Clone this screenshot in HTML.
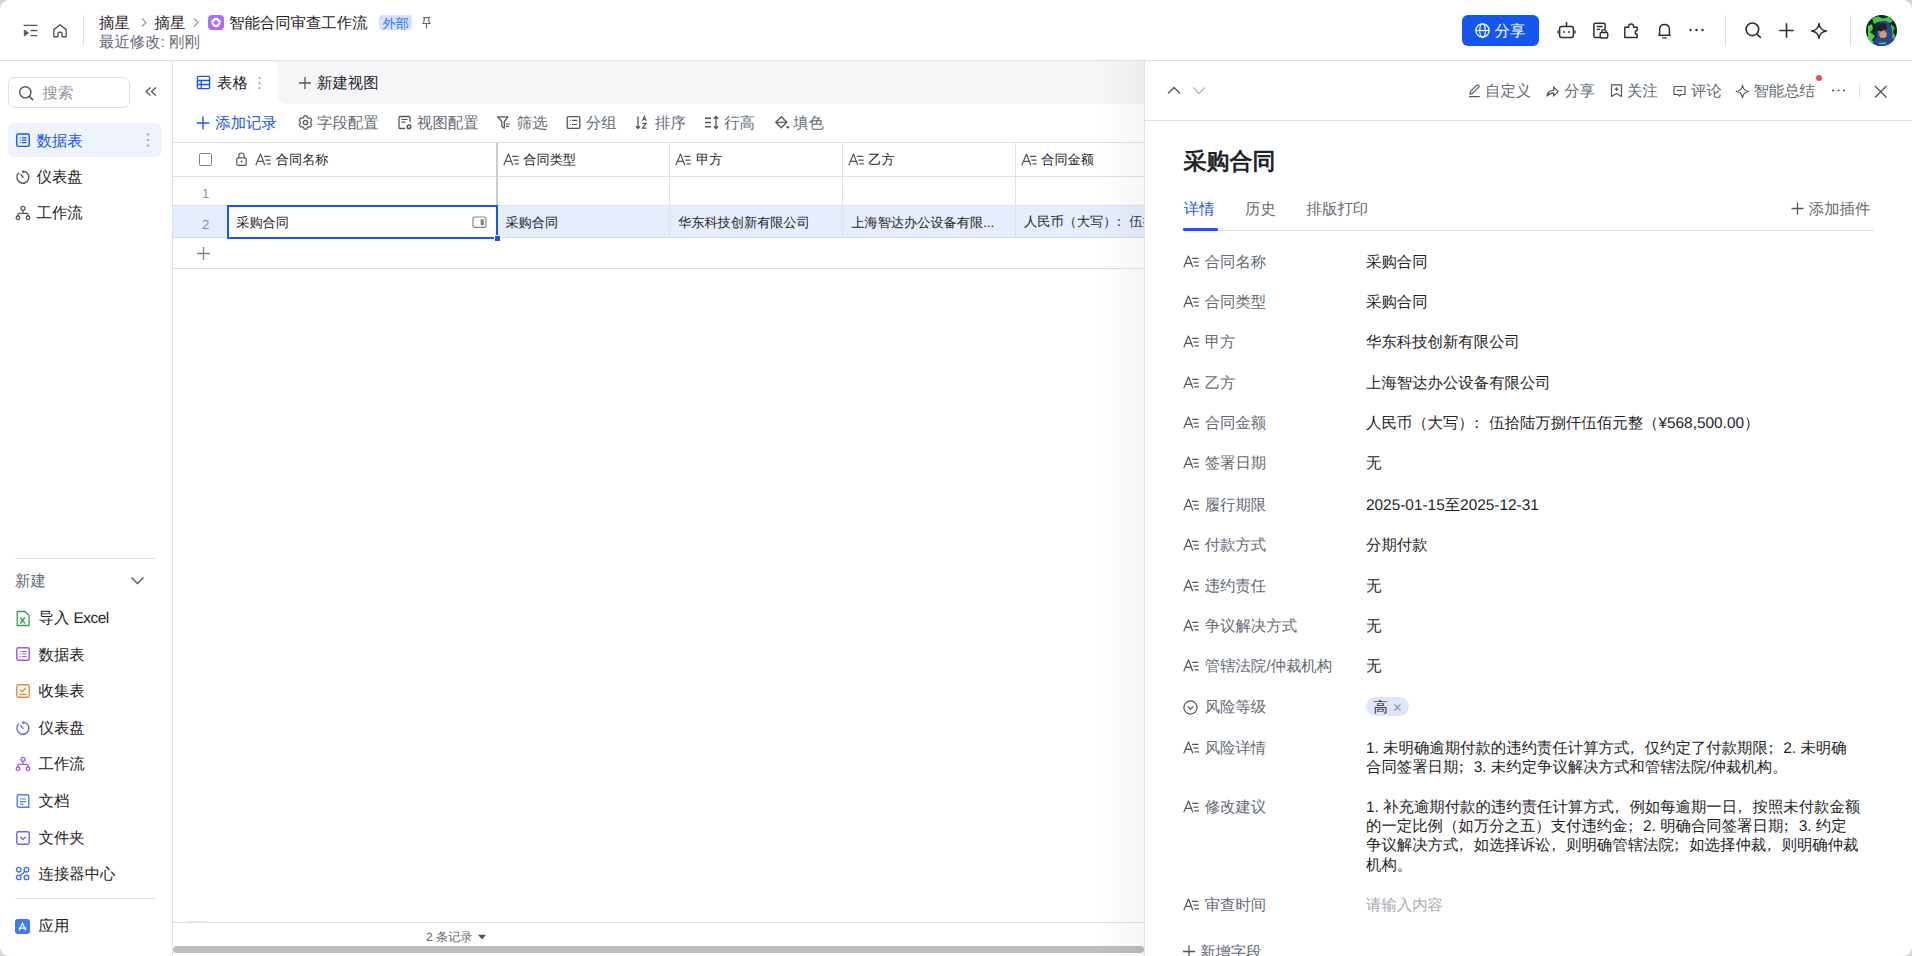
<!DOCTYPE html><html><head><meta charset="utf-8"><style>
html,body{margin:0;padding:0;width:1912px;height:956px;overflow:hidden;background:#fff;font-family:"Liberation Sans",sans-serif;text-rendering:geometricPrecision;}
.t{position:absolute;white-space:nowrap;}
.b{position:absolute;box-sizing:border-box;}
.i{position:absolute;overflow:visible;}
</style></head><body>
<div class="b" style="left:0px;top:60px;width:1912px;height:1px;background:#dee0e3"></div>
<svg class="i" style="left:22px;top:22px;" width="18" height="18" viewBox="0 0 18 18" fill="none"><path d="M2.1 3.4H15" stroke="#51565e" stroke-width="1.4" stroke-linecap="round"/><path d="M9 8.5H14.8M9 13.6H14.8" stroke="#51565e" stroke-width="1.4" stroke-linecap="round"/><path d="M2.3 8V14L6.5 11Z" fill="#51565e" stroke="#51565e" stroke-width="0.8" stroke-linejoin="round"/></svg>
<svg class="i" style="left:51px;top:22px;" width="18" height="18" viewBox="0 0 18 18" fill="none"><path d="M2.8 7.6L9 2.7L15.2 7.6V14.2Q15.2 14.8 14.6 14.8H11V11.3Q11 10.3 10 10.3H8Q7 10.3 7 11.3V14.8H3.4Q2.8 14.8 2.8 14.2Z" stroke="#51565e" stroke-width="1.4" stroke-linejoin="round"/></svg>
<div class="b" style="left:83px;top:15px;width:1px;height:31px;background:#dee0e3"></div>
<div class="t" style="left:99px;top:13.50px;font-size:15.4px;line-height:20px;color:#1f2329;font-weight:normal;">摘星</div>
<svg class="i" style="left:139px;top:16px;" width="10" height="13" viewBox="0 0 10 13" fill="none"><path d="M3 2.5L7 6.5L3 10.5" stroke="#8f959e" stroke-width="1.1"/></svg>
<div class="t" style="left:154.5px;top:13.50px;font-size:15.4px;line-height:20px;color:#1f2329;font-weight:normal;">摘星</div>
<svg class="i" style="left:191px;top:16px;" width="10" height="13" viewBox="0 0 10 13" fill="none"><path d="M3 2.5L7 6.5L3 10.5" stroke="#8f959e" stroke-width="1.1"/></svg>
<div class="b" style="left:208px;top:15px;width:16px;height:15px;border-radius:4px;background:linear-gradient(135deg,#9b7cf0,#c05ef0);"></div>
<svg class="i" style="left:208px;top:15px;" width="16" height="15" viewBox="0 0 16 15" fill="none"><path d="M7.1 3.9L4.4 6.6M8.9 3.9L11.6 6.6M7.1 11.1L4.4 8.4M8.9 11.1L11.6 8.4" stroke="#fff" stroke-width="2.3" stroke-linecap="round"/></svg>
<div class="t" style="left:229px;top:13.50px;font-size:15.4px;line-height:20px;color:#1f2329;font-weight:normal;">智能合同审查工作流</div>
<div class="b" style="left:379px;top:15px;width:33px;height:15px;border-radius:4px;background:#d6e2fd;"></div>
<div class="t" style="left:382.5px;top:13.50px;font-size:13.2px;line-height:20px;color:#3370ff;font-weight:normal;">外部</div>
<svg class="i" style="left:420px;top:15px;" width="13" height="15" viewBox="0 0 13 15" fill="none"><path d="M3 2.5H10M4.5 2.5L3.6 8.5H9.4L8.5 2.5M2.2 8.5H10.8M6.5 8.5V13.5" stroke="#646a73" stroke-width="1.2"/></svg>
<div class="t" style="left:99px;top:33.40px;font-size:15.4px;line-height:20px;color:#646a73;font-weight:normal;">最近修改: 刚刚</div>
<div class="b" style="left:1462px;top:15px;width:77px;height:31px;border-radius:6px;background:#1456f0;"></div>
<svg class="i" style="left:1474px;top:22px;" width="17" height="17" viewBox="0 0 17 17" fill="none"><circle cx="8.5" cy="8.5" r="6.6" stroke="#fff" stroke-width="1.3"/><ellipse cx="8.5" cy="8.5" rx="2.8" ry="6.6" stroke="#fff" stroke-width="1.2"/><path d="M2 8.5H15" stroke="#fff" stroke-width="1.2"/></svg>
<div class="t" style="left:1494.5px;top:21.50px;font-size:15.4px;line-height:20px;color:#fff;font-weight:normal;">分享</div>
<svg class="i" style="left:1557px;top:21px;" width="19" height="18" viewBox="0 0 19 18" fill="none"><rect x="2.6" y="5.6" width="13.8" height="11" rx="2" stroke="#2b2f36" stroke-width="1.5"/><path d="M9.5 5.6V2.5" stroke="#2b2f36" stroke-width="1.4"/><circle cx="9.5" cy="2" r="1" fill="#2b2f36"/><path d="M1 9.5V12.5M18 9.5V12.5" stroke="#2b2f36" stroke-width="1.3"/><circle cx="7" cy="11" r="0.9" fill="#2b2f36"/><circle cx="12" cy="11" r="0.9" fill="#2b2f36"/></svg>
<svg class="i" style="left:1592px;top:22px;" width="17" height="17" viewBox="0 0 17 17" fill="none"><path d="M9.5 15.5H3.2Q1.9 15.5 1.9 14.2V2.6Q1.9 1.3 3.2 1.3H11.8Q13.1 1.3 13.1 2.6V7" stroke="#2b2f36" stroke-width="1.5"/><path d="M4.7 4.5H10.5M4.7 7.3H8" stroke="#2b2f36" stroke-width="1.3"/><rect x="8.2" y="10.5" width="7.5" height="5.5" rx="1.2" stroke="#2b2f36" stroke-width="1.4"/><path d="M9.8 10.5V9.2Q9.8 7.6 11.95 7.6Q14.1 7.6 14.1 9.2V10.5" stroke="#2b2f36" stroke-width="1.3"/></svg>
<svg class="i" style="left:1623px;top:22px;" width="17" height="17" viewBox="0 0 17 17" fill="none"><path d="M1.8 15.6V5.2H5.6Q5.4 2 8.1 2Q10.8 2 10.6 5.2H14.2V8.6Q12.2 8.6 12.2 10.5Q12.2 12.4 14.2 12.4V15.6Z" stroke="#2b2f36" stroke-width="1.5" stroke-linejoin="round"/></svg>
<svg class="i" style="left:1656px;top:22px;" width="17" height="18" viewBox="0 0 17 18" fill="none"><path d="M2.3 13.2H14.7M3.6 13.2V7.6Q3.6 2.6 8.5 2.6Q13.4 2.6 13.4 7.6V13.2" stroke="#2b2f36" stroke-width="1.5" stroke-linejoin="round"/><path d="M6.8 15.9H10.2" stroke="#2b2f36" stroke-width="1.4" stroke-linecap="round"/></svg>
<svg class="i" style="left:1688px;top:26px;" width="18" height="8" viewBox="0 0 18 8" fill="none"><circle cx="2.5" cy="4" r="1.2" fill="#2b2f36"/><circle cx="8.5" cy="4" r="1.2" fill="#2b2f36"/><circle cx="14.5" cy="4" r="1.2" fill="#2b2f36"/></svg>
<div class="b" style="left:1725px;top:15px;width:1px;height:31px;background:#dee0e3"></div>
<svg class="i" style="left:1744px;top:21px;" width="18" height="18" viewBox="0 0 18 18" fill="none"><circle cx="8.4" cy="8.3" r="6.3" stroke="#2b2f36" stroke-width="1.6"/><path d="M13 13L16.3 16.3" stroke="#2b2f36" stroke-width="1.7" stroke-linecap="round"/></svg>
<svg class="i" style="left:1778px;top:22px;" width="17" height="17" viewBox="0 0 17 17" fill="none"><path d="M8.5 1.2V15.8M1.2 8.5H15.8" stroke="#2b2f36" stroke-width="1.6"/></svg>
<svg class="i" style="left:1810px;top:22px;" width="18" height="18" viewBox="0 0 18 18" fill="none"><path d="M9 1.5Q9.8 8.2 16.5 9Q9.8 9.8 9 16.5Q8.2 9.8 1.5 9Q8.2 8.2 9 1.5Z" stroke="#2b2f36" stroke-width="1.5" stroke-linejoin="round"/></svg>
<div class="b" style="left:1850px;top:15px;width:1px;height:31px;background:#dee0e3"></div>
<svg class="i" style="left:1866px;top:15px;" width="31" height="31" viewBox="0 0 31 31" fill="none"><defs><clipPath id="av"><circle cx="15.5" cy="15.5" r="15.5"/></clipPath></defs><g clip-path="url(#av)"><rect width="31" height="31" fill="#10281a"/><path d="M6 3L12 1.5L17 3.5L23 2L27 6L24 8L19 6L12 7L8 9Z" fill="#3fc84a"/><path d="M2 11L6 9L7 14L4 17L9 21L6 25L10 29L2 28Z" fill="#47d44a"/><path d="M25 9L29 13L27 17L30 22L27 27L24 24L25 18Z" fill="#39b845"/><path d="M6 31Q7 24 11 22Q9 12 13 8Q18 4 23 8Q27 13 26 22Q29 25 30 31Z" fill="#2c4590"/><path d="M10 15Q12 7 18 8Q22 9 21 14L14 17Z" fill="#2a1c2a"/><ellipse cx="17" cy="19.5" rx="3.8" ry="3.6" fill="#e8985c"/><circle cx="13.5" cy="17" r="1.2" fill="#3aaee0"/><circle cx="18" cy="16.2" r="1.2" fill="#5ab0c8"/><rect x="13" y="27.5" width="7" height="1.6" fill="#5cc45c"/></g></svg>
<div class="b" style="left:172px;top:61px;width:1px;height:895px;background:#dee0e3"></div>
<div class="b" style="left:8px;top:77px;width:122px;height:31px;border:1px solid #dee0e3;border-radius:7px;"></div>
<svg class="i" style="left:18px;top:85px;" width="16" height="16" viewBox="0 0 16 16" fill="none"><circle cx="7.3" cy="7.3" r="5.6" stroke="#51565e" stroke-width="1.4"/><path d="M11.4 11.4L14.6 14.6" stroke="#51565e" stroke-width="1.5" stroke-linecap="round"/></svg>
<div class="t" style="left:42.5px;top:83.90px;font-size:15.4px;line-height:20px;color:#8f959e;font-weight:normal;">搜索</div>
<svg class="i" style="left:144px;top:85px;" width="14" height="13" viewBox="0 0 14 13" fill="none"><path d="M6.5 2.5L2.2 6.5L6.5 10.5M11.8 2.5L7.5 6.5L11.8 10.5" stroke="#51565e" stroke-width="1.3"/></svg>
<div class="b" style="left:8px;top:123px;width:154px;height:34px;border-radius:7px;background:#eef3fe;"></div>
<svg class="i" style="left:15px;top:132px;" width="16" height="16" viewBox="0 0 16 16" fill="none"><rect x="1.8" y="2" width="12.4" height="12.4" rx="1.6" stroke="#1456f0" stroke-width="1.4"/><path d="M4.6 5.8H5.6M7 5.8H11.5M4.6 8.2H5.6M7 8.2H11.5M4.6 10.6H5.6M7 10.6H11.5" stroke="#1456f0" stroke-width="1.2"/></svg>
<div class="t" style="left:36.5px;top:131.80px;font-size:15.4px;line-height:20px;color:#1456f0;font-weight:normal;">数据表</div>
<svg class="i" style="left:145px;top:131px;" width="6" height="18" viewBox="0 0 6 18" fill="none"><circle cx="3" cy="3.5" r="0.9" fill="#7d838a"/><circle cx="3" cy="9" r="0.9" fill="#7d838a"/><circle cx="3" cy="14.5" r="0.9" fill="#7d838a"/></svg>
<svg class="i" style="left:14.5px;top:169px;" width="16" height="16" viewBox="0 0 16 16" fill="none"><path d="M8 2.2A6 6 0 1 1 3.6 4" stroke="#51565e" stroke-width="1.4" stroke-linecap="round"/><path d="M8 2.2V3.6M5.8 5.6L8 8.2" stroke="#51565e" stroke-width="1.4" stroke-linecap="round"/></svg>
<div class="t" style="left:36.5px;top:168.00px;font-size:15.4px;line-height:20px;color:#1f2329;font-weight:normal;">仪表盘</div>
<svg class="i" style="left:14.5px;top:205px;" width="16" height="16" viewBox="0 0 16 16" fill="none"><circle cx="8" cy="3.3" r="2" stroke="#51565e" stroke-width="1.3"/><circle cx="3" cy="12.8" r="1.8" stroke="#51565e" stroke-width="1.3"/><circle cx="13" cy="12.8" r="1.8" stroke="#51565e" stroke-width="1.3"/><path d="M8 5.3V8.3M3 11V9.3Q3 8.3 4 8.3H12Q13 8.3 13 9.3V11" stroke="#51565e" stroke-width="1.3"/></svg>
<div class="t" style="left:36.5px;top:204.20px;font-size:15.4px;line-height:20px;color:#1f2329;font-weight:normal;">工作流</div>
<div class="b" style="left:15px;top:558px;width:141px;height:1px;background:#dee0e3"></div>
<div class="t" style="left:15px;top:572.30px;font-size:15.4px;line-height:20px;color:#646a73;font-weight:normal;">新建</div>
<svg class="i" style="left:129px;top:573px;" width="17" height="14" viewBox="0 0 17 14" fill="none"><path d="M2.5 4.5L8.5 10.5L14.5 4.5" stroke="#51565e" stroke-width="1.4"/></svg>
<svg class="i" style="left:15px;top:610px;" width="16" height="17" viewBox="0 0 16 17" fill="none"><path d="M2.2 1.5H10L14 5.5V15.5H2.2Z" stroke="#2ea44f" stroke-width="1.3" stroke-linejoin="round"/><path d="M5.2 7.5L10 13.5M10 7.5L5.2 13.5" stroke="#2ea44f" stroke-width="1.3"/></svg>
<div class="t" style="left:38.5px;top:609.30px;font-size:15.4px;line-height:20px;color:#1f2329;font-weight:normal;">导入 <span style="letter-spacing:-0.5px">Excel</span></div>
<svg class="i" style="left:15px;top:646px;" width="16" height="16" viewBox="0 0 16 16" fill="none"><rect x="1.8" y="1.8" width="12.4" height="12.4" rx="1.6" stroke="#8a5cf6" stroke-width="1.4"/><path d="M4.5 5.5H5.5M7 5.5H11.5M4.5 8H5.5M7 8H11.5M4.5 10.5H5.5M7 10.5H11.5" stroke="#8a5cf6" stroke-width="1.2"/></svg>
<div class="t" style="left:38.5px;top:645.50px;font-size:15.4px;line-height:20px;color:#1f2329;font-weight:normal;">数据表</div>
<svg class="i" style="left:15px;top:683px;" width="16" height="16" viewBox="0 0 16 16" fill="none"><rect x="1.8" y="1.8" width="12.4" height="12.4" rx="1.6" stroke="#f5832a" stroke-width="1.4"/><path d="M5 6.5L7.2 8.5L11 4.8M4.5 11.3H11.5" stroke="#f5832a" stroke-width="1.3"/></svg>
<div class="t" style="left:38.5px;top:682.00px;font-size:15.4px;line-height:20px;color:#1f2329;font-weight:normal;">收集表</div>
<svg class="i" style="left:14.5px;top:719.5px;" width="16" height="16" viewBox="0 0 16 16" fill="none"><path d="M8 2.2A6 6 0 1 1 3.6 4" stroke="#6b63f6" stroke-width="1.4" stroke-linecap="round"/><path d="M8 2.2V3.6M5.8 5.6L8 8.2" stroke="#6b63f6" stroke-width="1.4" stroke-linecap="round"/></svg>
<div class="t" style="left:38.5px;top:718.50px;font-size:15.4px;line-height:20px;color:#1f2329;font-weight:normal;">仪表盘</div>
<svg class="i" style="left:14.5px;top:756px;" width="16" height="16" viewBox="0 0 16 16" fill="none"><circle cx="8" cy="3.3" r="2" stroke="#9e5cf0" stroke-width="1.3"/><circle cx="3" cy="12.8" r="1.8" stroke="#9e5cf0" stroke-width="1.3"/><circle cx="13" cy="12.8" r="1.8" stroke="#9e5cf0" stroke-width="1.3"/><path d="M8 5.3V8.3M3 11V9.3Q3 8.3 4 8.3H12Q13 8.3 13 9.3V11" stroke="#9e5cf0" stroke-width="1.3"/></svg>
<div class="t" style="left:38.5px;top:755.00px;font-size:15.4px;line-height:20px;color:#1f2329;font-weight:normal;">工作流</div>
<svg class="i" style="left:15px;top:793px;" width="16" height="16" viewBox="0 0 16 16" fill="none"><path d="M2.2 3.2Q2.2 1.8 3.6 1.8H12.4Q13.8 1.8 13.8 3.2V14.2H3.6Q2.2 14.2 2.2 12.8Z" stroke="#4b7bf5" stroke-width="1.4"/><path d="M5 6H11M5 8.6H11M5 11.2H8.5" stroke="#4b7bf5" stroke-width="1.2"/></svg>
<div class="t" style="left:38.5px;top:792.00px;font-size:15.4px;line-height:20px;color:#1f2329;font-weight:normal;">文档</div>
<svg class="i" style="left:15px;top:829.5px;" width="16" height="16" viewBox="0 0 16 16" fill="none"><rect x="1.8" y="1.8" width="12.4" height="12.4" rx="1.6" stroke="#6b63f6" stroke-width="1.4"/><path d="M5.3 6.8L8 9.5L10.7 6.8" stroke="#6b63f6" stroke-width="1.3"/></svg>
<div class="t" style="left:38.5px;top:828.80px;font-size:15.4px;line-height:20px;color:#1f2329;font-weight:normal;">文件夹</div>
<svg class="i" style="left:15px;top:866px;" width="16" height="16" viewBox="0 0 16 16" fill="none"><circle cx="3.7" cy="3.7" r="2.3" stroke="#3370ff" stroke-width="1.3"/><circle cx="11.5" cy="3.7" r="2.3" stroke="#3370ff" stroke-width="1.3"/><circle cx="3.7" cy="11.4" r="2.3" stroke="#3370ff" stroke-width="1.3"/><circle cx="11.5" cy="11.4" r="2.3" stroke="#3370ff" stroke-width="1.3"/><path d="M5.3 9.8L9.9 5.3" stroke="#3370ff" stroke-width="1.3"/></svg>
<div class="t" style="left:38.5px;top:865.00px;font-size:15.4px;line-height:20px;color:#1f2329;font-weight:normal;">连接器中心</div>
<div class="b" style="left:15px;top:898px;width:141px;height:1px;background:#dee0e3"></div>
<div class="b" style="left:15px;top:919px;width:15px;height:15px;border-radius:3px;background:#3e78f5;"></div>
<svg class="i" style="left:15px;top:919px;" width="15" height="15" viewBox="0 0 15 15" fill="none"><path d="M4.3 11.5L7.5 4L10.7 11.5M3.5 9.2H11.5" stroke="#fff" stroke-width="1.2"/></svg>
<div class="t" style="left:38.5px;top:917.40px;font-size:15.4px;line-height:20px;color:#1f2329;font-weight:normal;">应用</div>
<div class="b" style="left:173px;top:61px;width:971px;height:43px;background:#f5f6f8"></div>
<div class="b" style="left:173px;top:61px;width:105px;height:43px;background:#fff;border-top-right-radius:9px;"></div>
<div class="b" style="left:278px;top:95px;width:9px;height:9px;background:#fff;"></div>
<div class="b" style="left:278px;top:95px;width:9px;height:9px;background:#f5f6f8;border-bottom-left-radius:9px;"></div>
<svg class="i" style="left:196px;top:75px;" width="15" height="15" viewBox="0 0 15 15" fill="none"><rect x="1.4" y="1.4" width="12.2" height="12.2" rx="1.4" stroke="#1456f0" stroke-width="1.4"/><path d="M1.4 5.5H13.6M1.4 9.5H13.6M5.2 5.5V13.6" stroke="#1456f0" stroke-width="1.3"/></svg>
<div class="t" style="left:217px;top:74.30px;font-size:15.4px;line-height:20px;color:#1f2329;font-weight:normal;">表格</div>
<svg class="i" style="left:256px;top:74px;" width="7" height="18" viewBox="0 0 7 18" fill="none"><circle cx="3.5" cy="4" r="0.95" fill="#8f959e"/><circle cx="3.5" cy="9" r="0.95" fill="#8f959e"/><circle cx="3.5" cy="14" r="0.95" fill="#8f959e"/></svg>
<svg class="i" style="left:298px;top:76px;" width="14" height="14" viewBox="0 0 14 14" fill="none"><path d="M7 1V13M1 7H13" stroke="#51565e" stroke-width="1.3"/></svg>
<div class="t" style="left:317px;top:74.30px;font-size:15.4px;line-height:20px;color:#1f2329;font-weight:normal;">新建视图</div>
<div class="b" style="left:173px;top:142px;width:971px;height:1px;background:#dee0e3"></div>
<svg class="i" style="left:196px;top:116px;" width="14" height="14" viewBox="0 0 14 14" fill="none"><path d="M7 0.8V13.2M0.8 7H13.2" stroke="#1456f0" stroke-width="1.4"/></svg>
<div class="t" style="left:215.3px;top:113.50px;font-size:15.4px;line-height:20px;color:#1456f0;font-weight:normal;">添加记录</div>
<svg class="i" style="left:298px;top:115px;" width="15" height="15" viewBox="0 0 15 15" fill="none"><path d="M6.11 0.95 L8.89 0.95 L9.35 2.53 L10.88 3.42 L12.48 3.02 L13.87 5.43 L12.73 6.62 L12.73 8.38 L13.87 9.57 L12.48 11.98 L10.88 11.58 L9.35 12.47 L8.89 14.05 L6.11 14.05 L5.65 12.47 L4.12 11.58 L2.52 11.98 L1.13 9.57 L2.27 8.38 L2.27 6.62 L1.13 5.43 L2.52 3.02 L4.12 3.42 L5.65 2.53Z" stroke="#51565e" stroke-width="1.2" stroke-linejoin="round"/><circle cx="7.5" cy="7.5" r="2.2" stroke="#51565e" stroke-width="1.3"/></svg>
<div class="t" style="left:317px;top:113.50px;font-size:15.4px;line-height:20px;color:#646a73;font-weight:normal;">字段配置</div>
<svg class="i" style="left:397px;top:115px;" width="16" height="15" viewBox="0 0 16 15" fill="none"><path d="M8 13.5H3Q2 13.5 2 12.5V2.5Q2 1.5 3 1.5H12Q13 1.5 13 2.5V7" stroke="#51565e" stroke-width="1.3"/><path d="M4.5 4.5H10.5M4.5 7.2H8.5" stroke="#51565e" stroke-width="1.2"/><circle cx="12" cy="11.8" r="1.8" stroke="#51565e" stroke-width="1.5"/></svg>
<div class="t" style="left:417px;top:113.50px;font-size:15.4px;line-height:20px;color:#646a73;font-weight:normal;">视图配置</div>
<svg class="i" style="left:496px;top:115px;" width="16" height="15" viewBox="0 0 16 15" fill="none"><path d="M1.8 1.8H12L8.3 6.5V13.2L5.8 11.5V6.5Z" stroke="#51565e" stroke-width="1.3" stroke-linejoin="round"/><path d="M10 9H14M10 11.3H13" stroke="#51565e" stroke-width="1.2"/></svg>
<div class="t" style="left:516.8px;top:113.50px;font-size:15.4px;line-height:20px;color:#646a73;font-weight:normal;">筛选</div>
<svg class="i" style="left:566px;top:115px;" width="15" height="15" viewBox="0 0 15 15" fill="none"><rect x="1.2" y="1.6" width="12.6" height="11.8" rx="1.2" stroke="#51565e" stroke-width="1.3"/><path d="M3.8 5.3H4.6M6 5.3H11.2M3.8 9.5H4.6M6 9.5H11.2" stroke="#51565e" stroke-width="1.2"/></svg>
<div class="t" style="left:585.8px;top:113.50px;font-size:15.4px;line-height:20px;color:#646a73;font-weight:normal;">分组</div>
<svg class="i" style="left:635px;top:115px;" width="15" height="15" viewBox="0 0 15 15" fill="none"><path d="M3 1.5V13.5M1 11.3L3 13.5L5 11.3" stroke="#51565e" stroke-width="1.3"/><path d="M7.3 6L9.3 1.3L11.3 6M7.9 4.5H10.7" stroke="#51565e" stroke-width="1.1"/><path d="M7.4 8.4H11.2L7.4 13.2H11.4" stroke="#51565e" stroke-width="1.2"/></svg>
<div class="t" style="left:655px;top:113.50px;font-size:15.4px;line-height:20px;color:#646a73;font-weight:normal;">排序</div>
<svg class="i" style="left:704px;top:115px;" width="16" height="15" viewBox="0 0 16 15" fill="none"><path d="M1 3.2H7M1 7.5H7M1 11.8H7" stroke="#51565e" stroke-width="1.4"/><path d="M12 1.5V13.5M9.8 3.8L12 1.5L14.2 3.8M9.8 11.2L12 13.5L14.2 11.2" stroke="#51565e" stroke-width="1.3"/></svg>
<div class="t" style="left:724.2px;top:113.50px;font-size:15.4px;line-height:20px;color:#646a73;font-weight:normal;">行高</div>
<svg class="i" style="left:774px;top:115px;" width="16" height="15" viewBox="0 0 16 15" fill="none"><path d="M7.3 1.8L12.8 7.3L7.3 12.8L1.8 7.3Z" stroke="#51565e" stroke-width="1.3" stroke-linejoin="round"/><path d="M1.8 7.3H12.8" stroke="#51565e" stroke-width="1.2"/><circle cx="13.8" cy="12.3" r="1.3" fill="#51565e"/></svg>
<div class="t" style="left:793.2px;top:113.50px;font-size:15.4px;line-height:20px;color:#646a73;font-weight:normal;">填色</div>
<div class="b" style="left:173px;top:176px;width:971px;height:1px;background:#dee0e3"></div>
<div class="b" style="left:173px;top:205px;width:971px;height:1px;background:#dee0e3"></div>
<div class="b" style="left:173px;top:206px;width:54px;height:31px;background:#e6edfd"></div>
<div class="b" style="left:498px;top:206px;width:646px;height:31px;background:#e6edfd"></div>
<div class="b" style="left:173px;top:237px;width:971px;height:1px;background:#d5dcec"></div>
<div class="b" style="left:173px;top:268px;width:971px;height:1px;background:#dee0e3"></div>
<div class="b" style="left:669px;top:143px;width:1px;height:94px;background:#dee0e3"></div>
<div class="b" style="left:842px;top:143px;width:1px;height:94px;background:#dee0e3"></div>
<div class="b" style="left:1015px;top:143px;width:1px;height:94px;background:#dee0e3"></div>
<div class="b" style="left:496px;top:143px;width:2px;height:94px;background:#c9cdd4"></div>
<div class="b" style="left:199px;top:153px;width:13px;height:13px;border:1.3px solid #7d838a;border-radius:1.5px;"></div>
<svg class="i" style="left:235px;top:151px;" width="13" height="16" viewBox="0 0 13 16" fill="none"><rect x="1.8" y="6.8" width="9.4" height="7.6" rx="1.3" stroke="#51565e" stroke-width="1.2"/><path d="M3.8 6.8V4.8Q3.8 2 6.5 2Q9.2 2 9.2 4.8V6.8" stroke="#51565e" stroke-width="1.2"/><circle cx="6.5" cy="10.5" r="1" fill="#51565e"/></svg>
<svg class="i" style="left:253.5px;top:151.60000000000002px;" width="20" height="16" viewBox="0 0 20 16" fill="none"><path d="M1.8 13.3L6.5 2L10.8 13.3M4 9.4H9.2" stroke="#51565e" stroke-width="1.2" stroke-linejoin="round"/><path d="M10.4 4.3H15.9M11.8 8.1H16.2M13 11.9H16.4" stroke="#51565e" stroke-width="1.2" stroke-linecap="round"/></svg>
<div class="t" style="left:275.8px;top:149.90px;font-size:13.2px;line-height:20px;color:#1f2329;font-weight:normal;">合同名称</div>
<svg class="i" style="left:501.5px;top:151.60000000000002px;" width="20" height="16" viewBox="0 0 20 16" fill="none"><path d="M1.8 13.3L6.5 2L10.8 13.3M4 9.4H9.2" stroke="#51565e" stroke-width="1.2" stroke-linejoin="round"/><path d="M10.4 4.3H15.9M11.8 8.1H16.2M13 11.9H16.4" stroke="#51565e" stroke-width="1.2" stroke-linecap="round"/></svg>
<div class="t" style="left:523.3px;top:149.90px;font-size:13.2px;line-height:20px;color:#1f2329;font-weight:normal;">合同类型</div>
<svg class="i" style="left:674px;top:151.60000000000002px;" width="20" height="16" viewBox="0 0 20 16" fill="none"><path d="M1.8 13.3L6.5 2L10.8 13.3M4 9.4H9.2" stroke="#51565e" stroke-width="1.2" stroke-linejoin="round"/><path d="M10.4 4.3H15.9M11.8 8.1H16.2M13 11.9H16.4" stroke="#51565e" stroke-width="1.2" stroke-linecap="round"/></svg>
<div class="t" style="left:696px;top:149.90px;font-size:13.2px;line-height:20px;color:#1f2329;font-weight:normal;">甲方</div>
<svg class="i" style="left:847px;top:151.60000000000002px;" width="20" height="16" viewBox="0 0 20 16" fill="none"><path d="M1.8 13.3L6.5 2L10.8 13.3M4 9.4H9.2" stroke="#51565e" stroke-width="1.2" stroke-linejoin="round"/><path d="M10.4 4.3H15.9M11.8 8.1H16.2M13 11.9H16.4" stroke="#51565e" stroke-width="1.2" stroke-linecap="round"/></svg>
<div class="t" style="left:868.2px;top:149.90px;font-size:13.2px;line-height:20px;color:#1f2329;font-weight:normal;">乙方</div>
<svg class="i" style="left:1019.7px;top:151.60000000000002px;" width="20" height="16" viewBox="0 0 20 16" fill="none"><path d="M1.8 13.3L6.5 2L10.8 13.3M4 9.4H9.2" stroke="#51565e" stroke-width="1.2" stroke-linejoin="round"/><path d="M10.4 4.3H15.9M11.8 8.1H16.2M13 11.9H16.4" stroke="#51565e" stroke-width="1.2" stroke-linecap="round"/></svg>
<div class="t" style="left:1041.2px;top:149.90px;font-size:13.2px;line-height:20px;color:#1f2329;font-weight:normal;">合同金额</div>
<div class="t" style="left:202px;top:183.90px;font-size:13.2px;line-height:20px;color:#8f959e;font-weight:normal;">1</div>
<div class="t" style="left:202px;top:215.00px;font-size:13.2px;line-height:20px;color:#8f959e;font-weight:normal;">2</div>
<div class="b" style="left:227px;top:205px;width:271px;height:34px;border:2px solid #1456f0;background:#fff;"></div>
<div class="b" style="left:494.5px;top:235.5px;width:5px;height:5px;background:#1456f0;outline:1px solid #fff;"></div>
<div class="t" style="left:236.2px;top:213.00px;font-size:13.2px;line-height:20px;color:#1f2329;font-weight:normal;">采购合同</div>
<svg class="i" style="left:472px;top:215.5px;" width="15" height="12" viewBox="0 0 15 12" fill="none"><rect x="1" y="1" width="13" height="10.4" rx="1.5" stroke="#7d838a" stroke-width="1.2"/><rect x="8.6" y="3.2" width="3.2" height="6" fill="#7d838a"/></svg>
<div class="t" style="left:505.4px;top:213.00px;font-size:13.2px;line-height:20px;color:#1f2329;font-weight:normal;">采购合同</div>
<div class="t" style="left:678px;top:213.00px;font-size:13.2px;line-height:20px;color:#1f2329;font-weight:normal;">华东科技创新有限公司</div>
<div class="t" style="left:851.3px;top:213.00px;font-size:13.2px;line-height:20px;color:#1f2329;font-weight:normal;">上海智达办公设备有限...</div>
<div class="b" style="left:1016px;top:206px;width:128px;height:31px;overflow:hidden;"><div class="t" style="left:8px;top:6px;font-size:13.2px;line-height:20px;color:#1f2329">人民币（大写）<span style="position:relative;left:-0.31em">：</span>伍拾陆万捌仟伍佰元整（¥568,500.00）</div></div>
<svg class="i" style="left:196px;top:246px;" width="15" height="15" viewBox="0 0 15 15" fill="none"><path d="M7.5 1V14M1 7.5H14" stroke="#7d838a" stroke-width="1.3"/></svg>
<div class="b" style="left:173px;top:922px;width:971px;height:1px;background:#dee0e3"></div>
<div class="b" style="left:188px;top:921px;width:19px;height:1px;background:#e8e9eb"></div>
<div class="t" style="left:426px;top:927.20px;font-size:12.1px;line-height:20px;color:#646a73;font-weight:normal;">2 条记录</div>
<svg class="i" style="left:476px;top:933px;" width="12" height="8" viewBox="0 0 12 8" fill="none"><path d="M2 1.8H10L6 6.5Z" fill="#51565e"/></svg>
<div class="b" style="left:173px;top:946px;width:971px;height:7px;border-radius:4px;background:#bcbec2;"></div>
<div class="b" style="left:1096px;top:61px;width:48px;height:895px;background:linear-gradient(90deg,rgba(0,0,0,0),rgba(0,0,0,0.035));"></div>
<div class="b" style="left:1144px;top:61px;width:768px;height:895px;background:#fff;border-left:1px solid #dee0e3;"></div>
<div class="b" style="left:1145px;top:120px;width:767px;height:1px;background:#dee0e3"></div>
<svg class="i" style="left:1166px;top:85px;" width="16" height="10" viewBox="0 0 16 10" fill="none"><path d="M2 8.5L8 2.5L14 8.5" stroke="#51565e" stroke-width="1.4"/></svg>
<svg class="i" style="left:1191px;top:85px;" width="16" height="11" viewBox="0 0 16 11" fill="none"><path d="M2 2.5L8 8.5L14 2.5" stroke="#b5b9be" stroke-width="1.3"/></svg>
<svg class="i" style="left:1467px;top:83px;" width="14" height="15" viewBox="0 0 14 15" fill="none"><path d="M3 11.2L3.4 8.6L9.8 2.2Q10.6 1.4 11.4 2.2L11.8 2.6Q12.6 3.4 11.8 4.2L5.4 10.6Z" stroke="#51565e" stroke-width="1.2" stroke-linejoin="round"/><path d="M2 13.6H12.8" stroke="#51565e" stroke-width="1.2"/></svg>
<div class="t" style="left:1485px;top:81.70px;font-size:15.4px;line-height:20px;color:#646a73;font-weight:normal;">自定义</div>
<svg class="i" style="left:1545px;top:84px;" width="15" height="14" viewBox="0 0 15 14" fill="none"><path d="M2 12Q2.5 6.3 8.6 6.3V3L13.2 7.6L8.6 12V8.9Q4.5 8.9 2 12Z" stroke="#51565e" stroke-width="1.2" stroke-linejoin="round"/></svg>
<div class="t" style="left:1564.2px;top:81.70px;font-size:15.4px;line-height:20px;color:#646a73;font-weight:normal;">分享</div>
<svg class="i" style="left:1610px;top:83px;" width="13" height="15" viewBox="0 0 13 15" fill="none"><path d="M1.5 1.8H11.5V13.5L6.5 10.5L1.5 13.5Z" stroke="#51565e" stroke-width="1.2" stroke-linejoin="round"/><path d="M6.5 4.2V8M4.6 6.1H8.4" stroke="#51565e" stroke-width="1.1"/></svg>
<div class="t" style="left:1627px;top:81.70px;font-size:15.4px;line-height:20px;color:#646a73;font-weight:normal;">关注</div>
<svg class="i" style="left:1672px;top:84px;" width="15" height="14" viewBox="0 0 15 14" fill="none"><path d="M2 2.5H13V10.5H9L7.5 12.2L6 10.5H2Z" stroke="#51565e" stroke-width="1.2" stroke-linejoin="round"/><path d="M4.8 6.5H10.2" stroke="#51565e" stroke-width="1.2"/></svg>
<div class="t" style="left:1691px;top:81.70px;font-size:15.4px;line-height:20px;color:#646a73;font-weight:normal;">评论</div>
<svg class="i" style="left:1735px;top:84px;" width="15" height="15" viewBox="0 0 15 15" fill="none"><path d="M7.5 1.2Q8.2 6.8 13.8 7.5Q8.2 8.2 7.5 13.8Q6.8 8.2 1.2 7.5Q6.8 6.8 7.5 1.2Z" stroke="#51565e" stroke-width="1.2" stroke-linejoin="round"/></svg>
<div class="t" style="left:1753.4px;top:81.70px;font-size:15.4px;line-height:20px;color:#646a73;font-weight:normal;">智能总结</div>
<div class="b" style="left:1816px;top:74.7px;width:6px;height:6px;border-radius:50%;background:#f54a45;"></div>
<svg class="i" style="left:1830px;top:86px;" width="17" height="8" viewBox="0 0 17 8" fill="none"><circle cx="3" cy="4.5" r="1.1" fill="#51565e"/><circle cx="8.5" cy="4.5" r="1.1" fill="#51565e"/><circle cx="14" cy="4.5" r="1.1" fill="#51565e"/></svg>
<div class="b" style="left:1859px;top:83px;width:1px;height:15px;background:#dee0e3"></div>
<svg class="i" style="left:1873px;top:83.5px;" width="15" height="15" viewBox="0 0 15 15" fill="none"><path d="M2 2L13.5 13.5M13.5 2L2 13.5" stroke="#51565e" stroke-width="1.4"/></svg>
<div class="t" style="left:1183.5px;top:146.00px;font-size:23px;line-height:30px;color:#1f2329;font-weight:bold;">采购合同</div>
<div class="t" style="left:1183.8px;top:200.00px;font-size:15.4px;line-height:20px;color:#1456f0;font-weight:normal;">详情</div>
<div class="t" style="left:1245px;top:200.00px;font-size:15.4px;line-height:20px;color:#646a73;font-weight:normal;">历史</div>
<div class="t" style="left:1306.6px;top:200.00px;font-size:15.4px;line-height:20px;color:#646a73;font-weight:normal;">排版打印</div>
<div class="b" style="left:1183px;top:230px;width:691px;height:1px;background:#dee0e3"></div>
<div class="b" style="left:1183px;top:228px;width:35px;height:3px;background:#1456f0;border-radius:1px"></div>
<svg class="i" style="left:1790px;top:201px;" width="15" height="15" viewBox="0 0 15 15" fill="none"><path d="M7.5 1.5V13.5M1.5 7.5H13.5" stroke="#51565e" stroke-width="1.3"/></svg>
<div class="t" style="left:1808.8px;top:199.50px;font-size:15.4px;line-height:20px;color:#646a73;font-weight:normal;">添加插件</div>
<svg class="i" style="left:1182px;top:253.5px;" width="20" height="16" viewBox="0 0 20 16" fill="none"><path d="M1.8 13.3L6.5 2L10.8 13.3M4 9.4H9.2" stroke="#51565e" stroke-width="1.2" stroke-linejoin="round"/><path d="M10.4 4.3H15.9M11.8 8.1H16.2M13 11.9H16.4" stroke="#51565e" stroke-width="1.2" stroke-linecap="round"/></svg>
<div class="t" style="left:1204.7px;top:252.50px;font-size:15.4px;line-height:20px;color:#646a73;font-weight:normal;">合同名称</div>
<div class="t" style="left:1366px;top:252.50px;font-size:15.4px;line-height:20px;color:#1f2329;font-weight:normal;">采购合同</div>
<svg class="i" style="left:1182px;top:294.3px;" width="20" height="16" viewBox="0 0 20 16" fill="none"><path d="M1.8 13.3L6.5 2L10.8 13.3M4 9.4H9.2" stroke="#51565e" stroke-width="1.2" stroke-linejoin="round"/><path d="M10.4 4.3H15.9M11.8 8.1H16.2M13 11.9H16.4" stroke="#51565e" stroke-width="1.2" stroke-linecap="round"/></svg>
<div class="t" style="left:1204.7px;top:293.30px;font-size:15.4px;line-height:20px;color:#646a73;font-weight:normal;">合同类型</div>
<div class="t" style="left:1366px;top:293.30px;font-size:15.4px;line-height:20px;color:#1f2329;font-weight:normal;">采购合同</div>
<svg class="i" style="left:1182px;top:334.0px;" width="20" height="16" viewBox="0 0 20 16" fill="none"><path d="M1.8 13.3L6.5 2L10.8 13.3M4 9.4H9.2" stroke="#51565e" stroke-width="1.2" stroke-linejoin="round"/><path d="M10.4 4.3H15.9M11.8 8.1H16.2M13 11.9H16.4" stroke="#51565e" stroke-width="1.2" stroke-linecap="round"/></svg>
<div class="t" style="left:1204.7px;top:333.00px;font-size:15.4px;line-height:20px;color:#646a73;font-weight:normal;">甲方</div>
<div class="t" style="left:1366px;top:333.00px;font-size:15.4px;line-height:20px;color:#1f2329;font-weight:normal;">华东科技创新有限公司</div>
<svg class="i" style="left:1182px;top:374.8px;" width="20" height="16" viewBox="0 0 20 16" fill="none"><path d="M1.8 13.3L6.5 2L10.8 13.3M4 9.4H9.2" stroke="#51565e" stroke-width="1.2" stroke-linejoin="round"/><path d="M10.4 4.3H15.9M11.8 8.1H16.2M13 11.9H16.4" stroke="#51565e" stroke-width="1.2" stroke-linecap="round"/></svg>
<div class="t" style="left:1204.7px;top:373.80px;font-size:15.4px;line-height:20px;color:#646a73;font-weight:normal;">乙方</div>
<div class="t" style="left:1366px;top:373.80px;font-size:15.4px;line-height:20px;color:#1f2329;font-weight:normal;">上海智达办公设备有限公司</div>
<svg class="i" style="left:1182px;top:415.0px;" width="20" height="16" viewBox="0 0 20 16" fill="none"><path d="M1.8 13.3L6.5 2L10.8 13.3M4 9.4H9.2" stroke="#51565e" stroke-width="1.2" stroke-linejoin="round"/><path d="M10.4 4.3H15.9M11.8 8.1H16.2M13 11.9H16.4" stroke="#51565e" stroke-width="1.2" stroke-linecap="round"/></svg>
<div class="t" style="left:1204.7px;top:414.00px;font-size:15.4px;line-height:20px;color:#646a73;font-weight:normal;">合同金额</div>
<div class="t" style="left:1366px;top:414.00px;font-size:15.4px;line-height:20px;color:#1f2329;font-weight:normal;">人民币（大写）<span style="position:relative;left:-0.31em">：</span>伍拾陆万捌仟伍佰元整（¥568,500.00）</div>
<svg class="i" style="left:1182px;top:455.3px;" width="20" height="16" viewBox="0 0 20 16" fill="none"><path d="M1.8 13.3L6.5 2L10.8 13.3M4 9.4H9.2" stroke="#51565e" stroke-width="1.2" stroke-linejoin="round"/><path d="M10.4 4.3H15.9M11.8 8.1H16.2M13 11.9H16.4" stroke="#51565e" stroke-width="1.2" stroke-linecap="round"/></svg>
<div class="t" style="left:1204.7px;top:454.30px;font-size:15.4px;line-height:20px;color:#646a73;font-weight:normal;">签署日期</div>
<div class="t" style="left:1366px;top:454.30px;font-size:15.4px;line-height:20px;color:#1f2329;font-weight:normal;">无</div>
<svg class="i" style="left:1182px;top:496.6px;" width="20" height="16" viewBox="0 0 20 16" fill="none"><path d="M1.8 13.3L6.5 2L10.8 13.3M4 9.4H9.2" stroke="#51565e" stroke-width="1.2" stroke-linejoin="round"/><path d="M10.4 4.3H15.9M11.8 8.1H16.2M13 11.9H16.4" stroke="#51565e" stroke-width="1.2" stroke-linecap="round"/></svg>
<div class="t" style="left:1204.7px;top:495.60px;font-size:15.4px;line-height:20px;color:#646a73;font-weight:normal;">履行期限</div>
<div class="t" style="left:1366px;top:495.60px;font-size:15.4px;line-height:20px;color:#1f2329;font-weight:normal;">2025-01-15至2025-12-31</div>
<svg class="i" style="left:1182px;top:536.6px;" width="20" height="16" viewBox="0 0 20 16" fill="none"><path d="M1.8 13.3L6.5 2L10.8 13.3M4 9.4H9.2" stroke="#51565e" stroke-width="1.2" stroke-linejoin="round"/><path d="M10.4 4.3H15.9M11.8 8.1H16.2M13 11.9H16.4" stroke="#51565e" stroke-width="1.2" stroke-linecap="round"/></svg>
<div class="t" style="left:1204.7px;top:535.60px;font-size:15.4px;line-height:20px;color:#646a73;font-weight:normal;">付款方式</div>
<div class="t" style="left:1366px;top:535.60px;font-size:15.4px;line-height:20px;color:#1f2329;font-weight:normal;">分期付款</div>
<svg class="i" style="left:1182px;top:578.0px;" width="20" height="16" viewBox="0 0 20 16" fill="none"><path d="M1.8 13.3L6.5 2L10.8 13.3M4 9.4H9.2" stroke="#51565e" stroke-width="1.2" stroke-linejoin="round"/><path d="M10.4 4.3H15.9M11.8 8.1H16.2M13 11.9H16.4" stroke="#51565e" stroke-width="1.2" stroke-linecap="round"/></svg>
<div class="t" style="left:1204.7px;top:577.00px;font-size:15.4px;line-height:20px;color:#646a73;font-weight:normal;">违约责任</div>
<div class="t" style="left:1366px;top:577.00px;font-size:15.4px;line-height:20px;color:#1f2329;font-weight:normal;">无</div>
<svg class="i" style="left:1182px;top:618.2px;" width="20" height="16" viewBox="0 0 20 16" fill="none"><path d="M1.8 13.3L6.5 2L10.8 13.3M4 9.4H9.2" stroke="#51565e" stroke-width="1.2" stroke-linejoin="round"/><path d="M10.4 4.3H15.9M11.8 8.1H16.2M13 11.9H16.4" stroke="#51565e" stroke-width="1.2" stroke-linecap="round"/></svg>
<div class="t" style="left:1204.7px;top:617.20px;font-size:15.4px;line-height:20px;color:#646a73;font-weight:normal;">争议解决方式</div>
<div class="t" style="left:1366px;top:617.20px;font-size:15.4px;line-height:20px;color:#1f2329;font-weight:normal;">无</div>
<svg class="i" style="left:1182px;top:658.0px;" width="20" height="16" viewBox="0 0 20 16" fill="none"><path d="M1.8 13.3L6.5 2L10.8 13.3M4 9.4H9.2" stroke="#51565e" stroke-width="1.2" stroke-linejoin="round"/><path d="M10.4 4.3H15.9M11.8 8.1H16.2M13 11.9H16.4" stroke="#51565e" stroke-width="1.2" stroke-linecap="round"/></svg>
<div class="t" style="left:1204.7px;top:657.00px;font-size:15.4px;line-height:20px;color:#646a73;font-weight:normal;">管辖法院/仲裁机构</div>
<div class="t" style="left:1366px;top:657.00px;font-size:15.4px;line-height:20px;color:#1f2329;font-weight:normal;">无</div>
<svg class="i" style="left:1182px;top:698.8px;" width="17" height="17" viewBox="0 0 17 17" fill="none"><circle cx="8.5" cy="8.5" r="6.6" stroke="#51565e" stroke-width="1.2"/><path d="M5.7 7.3L8.5 10.1L11.3 7.3" stroke="#51565e" stroke-width="1.2"/></svg>
<div class="t" style="left:1204.7px;top:697.80px;font-size:15.4px;line-height:20px;color:#646a73;font-weight:normal;">风险等级</div>
<div class="b" style="left:1366px;top:697px;width:43px;height:19px;border-radius:10px;background:#dfe6fb;"></div>
<div class="t" style="left:1373.5px;top:697.80px;font-size:14.3px;line-height:20px;color:#1f2329;font-weight:normal;">高</div>
<svg class="i" style="left:1393px;top:702.8px;" width="9" height="9" viewBox="0 0 9 9" fill="none"><path d="M1.5 1.5L7.5 7.5M7.5 1.5L1.5 7.5" stroke="#8f959e" stroke-width="1.1"/></svg>
<svg class="i" style="left:1182px;top:739.9px;" width="20" height="16" viewBox="0 0 20 16" fill="none"><path d="M1.8 13.3L6.5 2L10.8 13.3M4 9.4H9.2" stroke="#51565e" stroke-width="1.2" stroke-linejoin="round"/><path d="M10.4 4.3H15.9M11.8 8.1H16.2M13 11.9H16.4" stroke="#51565e" stroke-width="1.2" stroke-linecap="round"/></svg>
<div class="t" style="left:1204.7px;top:738.90px;font-size:15.4px;line-height:20px;color:#646a73;font-weight:normal;">风险详情</div>
<div class="t" style="left:1366px;top:738.90px;font-size:15.4px;line-height:20px;color:#1f2329;font-weight:normal;">1. 未明确逾期付款的违约责任计算方式<span style="position:relative;left:-0.31em">，</span>仅约定了付款期限<span style="position:relative;left:-0.31em">；</span>2. 未明确</div>
<div class="t" style="left:1366px;top:758.30px;font-size:15.4px;line-height:20px;color:#1f2329;font-weight:normal;">合同签署日期<span style="position:relative;left:-0.31em">；</span>3. 未约定争议解决方式和管辖法院/仲裁机构。</div>
<svg class="i" style="left:1182px;top:798.6px;" width="20" height="16" viewBox="0 0 20 16" fill="none"><path d="M1.8 13.3L6.5 2L10.8 13.3M4 9.4H9.2" stroke="#51565e" stroke-width="1.2" stroke-linejoin="round"/><path d="M10.4 4.3H15.9M11.8 8.1H16.2M13 11.9H16.4" stroke="#51565e" stroke-width="1.2" stroke-linecap="round"/></svg>
<div class="t" style="left:1204.7px;top:797.60px;font-size:15.4px;line-height:20px;color:#646a73;font-weight:normal;">修改建议</div>
<div class="t" style="left:1366px;top:797.60px;font-size:15.4px;line-height:20px;color:#1f2329;font-weight:normal;">1. 补充逾期付款的违约责任计算方式<span style="position:relative;left:-0.31em">，</span>例如每逾期一日<span style="position:relative;left:-0.31em">，</span>按照未付款金额</div>
<div class="t" style="left:1366px;top:817.00px;font-size:15.4px;line-height:20px;color:#1f2329;font-weight:normal;">的一定比例（如万分之五）支付违约金<span style="position:relative;left:-0.31em">；</span>2. 明确合同签署日期<span style="position:relative;left:-0.31em">；</span>3. 约定</div>
<div class="t" style="left:1366px;top:836.40px;font-size:15.4px;line-height:20px;color:#1f2329;font-weight:normal;">争议解决方式<span style="position:relative;left:-0.31em">，</span>如选择诉讼<span style="position:relative;left:-0.31em">，</span>则明确管辖法院<span style="position:relative;left:-0.31em">；</span>如选择仲裁<span style="position:relative;left:-0.31em">，</span>则明确仲裁</div>
<div class="t" style="left:1366px;top:855.80px;font-size:15.4px;line-height:20px;color:#1f2329;font-weight:normal;">机构。</div>
<svg class="i" style="left:1182px;top:896.7px;" width="20" height="16" viewBox="0 0 20 16" fill="none"><path d="M1.8 13.3L6.5 2L10.8 13.3M4 9.4H9.2" stroke="#51565e" stroke-width="1.2" stroke-linejoin="round"/><path d="M10.4 4.3H15.9M11.8 8.1H16.2M13 11.9H16.4" stroke="#51565e" stroke-width="1.2" stroke-linecap="round"/></svg>
<div class="t" style="left:1204.7px;top:895.70px;font-size:15.4px;line-height:20px;color:#646a73;font-weight:normal;">审查时间</div>
<div class="t" style="left:1366px;top:895.70px;font-size:15.4px;line-height:20px;color:#a8acb2;font-weight:normal;">请输入内容</div>
<svg class="i" style="left:1182px;top:944px;" width="14" height="14" viewBox="0 0 14 14" fill="none"><path d="M7 1.5V13.5M1 7.5H13" stroke="#51565e" stroke-width="1.3"/></svg>
<div class="t" style="left:1200px;top:942.50px;font-size:15.4px;line-height:20px;color:#646a73;font-weight:normal;">新增字段</div>
<div style="position:absolute;left:0;top:0;width:1912px;height:956px;border-radius:9px;box-shadow:0 0 0 12px #d3d5d9;pointer-events:none"></div>
</body></html>
